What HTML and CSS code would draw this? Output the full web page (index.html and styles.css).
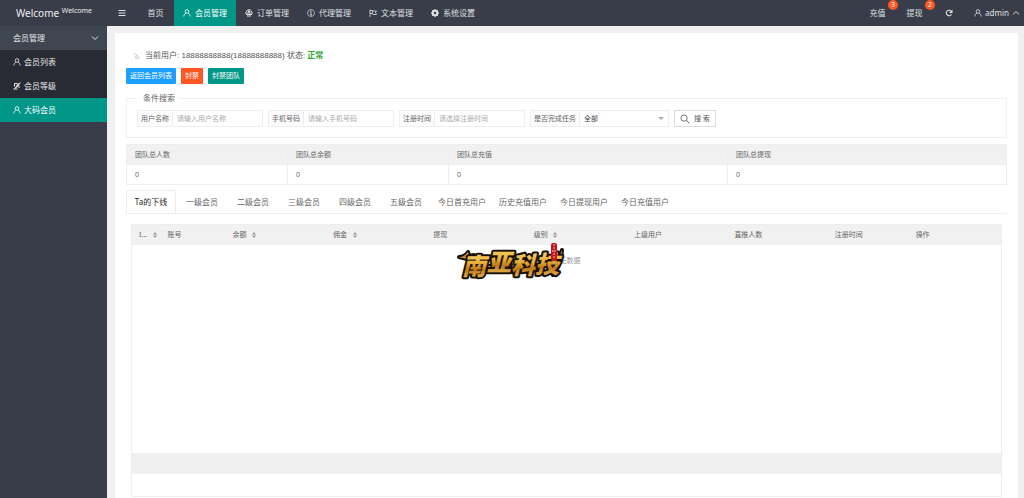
FILE: index.html
```html
<!DOCTYPE html>
<html lang="zh-CN">
<head>
<meta charset="utf-8">
<title>会员管理</title>
<link rel="stylesheet" href="styles.css">
</head>
<body>
<svg class="defs" aria-hidden="true">
  <symbol id="user" viewBox="0 0 16 16"><g fill="none" stroke="currentColor" stroke-width="1.7"><circle cx="8" cy="5" r="3.6"/><path d="M1.5 15c.3-4 2.500-5.800 4.500-6.500M14.500 15c-.3-4-2.500-5.800-4.500-6.500"/></g></symbol>
  <symbol id="down" viewBox="0 0 16 16"><path d="M2 5l6 6 6-6" fill="none" stroke="currentColor" stroke-width="2"/></symbol>
  <symbol id="sort" viewBox="0 0 8 12"><path d="M4 0l4 5H0zM4 12L0 7h8z" fill="#999"/></symbol>
</svg>
<div class="app">
  <aside class="side">
    <div class="brand">Welcome <sup class="brand-sup">Welcome</sup></div>
    <nav class="menu">
      <button class="menu-head" type="button">会员管理<svg class="icon"><use href="#down"/></svg></button>
      <a class="menu-item" href="#"><svg class="icon"><use href="#user"/></svg>会员列表</a>
      <a class="menu-item" href="#"><svg class="icon" viewBox="0 0 16 16"><path d="M3 3h6M3 3v6M12 7v5M1 14h8" fill="none" stroke="currentColor" stroke-width="2"/><path d="M16 0L9 4l-4 6-4 5 7-4 4-5z" fill="currentColor"/></svg>会员等级</a>
      <a class="menu-item active" href="#"><svg class="icon"><use href="#user"/></svg>大码会员</a>
    </nav>
  </aside>
  <div class="body">
    <header class="top">
      <button class="top-item toggle" type="button" aria-label="菜单"><svg class="icon" viewBox="0 0 16 16"><path d="M1 3h14M1 8h14M1 13h14" stroke="currentColor" stroke-width="2"/></svg></button>
      <a class="top-item home" href="#">首页</a>
      <a class="top-item active" href="#"><svg class="icon"><use href="#user"/></svg>会员管理</a>
      <a class="top-item" href="#"><svg class="icon" viewBox="0 0 16 16"><path d="M3 6c0-6 10-6 10 0M0 8h16M2 11h12M4 14h8" fill="none" stroke="currentColor" stroke-width="2"/><path d="M6 3h4v4H6z" fill="currentColor"/></svg>订单管理</a>
      <a class="top-item" href="#"><svg class="icon" viewBox="0 0 16 16"><circle cx="8" cy="8" r="7" fill="none" stroke="currentColor" stroke-width="1.300"/><path d="M6 6l2-1v7M6 12h4M8 2.500v1.500" fill="none" stroke="currentColor" stroke-width="1.600"/></svg>代理管理</a>
      <a class="top-item" href="#"><svg class="icon" viewBox="0 0 16 16"><path d="M2 1v15M2 3h5v6H2M7 4h8l-2 3 2 4H7" fill="none" stroke="currentColor" stroke-width="1.600"/></svg>文本管理</a>
      <a class="top-item" href="#"><svg class="icon" viewBox="0 0 16 16"><circle cx="8" cy="8" r="4.500" fill="none" stroke="currentColor" stroke-width="4"/><path d="M8 0v3M8 13v3M0 8h3M13 8h3M2.500 2.500l2 2M11.500 11.500l2 2M13.500 2.500l-2 2M4.500 11.500l-2 2" stroke="currentColor" stroke-width="2.500"/></svg>系统设置</a>
      <div class="top-right">
        <a class="top-item home" href="#">充值<span class="badge">3</span></a>
        <a class="top-item home" href="#">提现<span class="badge">2</span></a>
        <button class="top-item refresh" type="button" aria-label="刷新"><svg class="icon" viewBox="0 0 16 16"><path d="M13 10.500A5.500 5.500 0 1 1 12 4" fill="none" stroke="currentColor" stroke-width="2.200"/><path d="M15 1v7H8z" fill="currentColor"/></svg></button>
        <button class="top-item account" type="button"><svg class="icon"><use href="#user"/></svg>admin<svg class="icon flip"><use href="#down"/></svg></button>
      </div>
    </header>
    <main class="card">
      <p class="current"><svg class="icon faint" viewBox="0 0 16 16"><path d="M2 3l7 4-6 3M8 8l6 5M4 13h6" fill="none" stroke="currentColor" stroke-width="1.500"/></svg><span>当前用户: 18888888888(18888888888) 状态: <b class="ok">正常</b></span></p>
      <div class="actions">
        <button class="btn blue" type="button">返回会员列表</button>
        <button class="btn orange" type="button">封禁</button>
        <button class="btn teal" type="button">封禁团队</button>
      </div>
      <form class="search-form">
        <fieldset class="search">
          <legend class="legend">条件搜索</legend>
          <div class="fields">
            <div class="field"><label class="label" for="name">用户名称</label><input class="input" id="name" type="text" placeholder="请输入用户名称"></div>
            <div class="field"><label class="label" for="phone">手机号码</label><input class="input" id="phone" type="text" placeholder="请输入手机号码"></div>
            <div class="field"><label class="label" for="time">注册时间</label><input class="input" id="time" type="text" placeholder="请选择注册时间"></div>
            <div class="field wide"><label class="label" for="done">是否完成任务</label><select class="input select" id="done"><option>全部</option></select><svg class="arrow" viewBox="0 0 6 3" aria-hidden="true"><path d="M0 0h6L3 3z" fill="#aaa"/></svg></div>
            <button class="submit" type="button"><svg class="lens" viewBox="0 0 16 16"><path d="M10 10l5 5" stroke="currentColor" stroke-width="1.500"/><circle cx="6.500" cy="6.500" r="5" fill="none" stroke="currentColor" stroke-width="1.300"/></svg>搜 索</button>
          </div>
        </fieldset>
      </form>
      <table class="totals">
        <thead><tr><th class="narrow">团队总人数</th><th class="narrow">团队总余额</th><th>团队总充值</th><th>团队总提现</th></tr></thead>
        <tbody><tr><td>0</td><td>0</td><td>0</td><td>0</td></tr></tbody>
      </table>
      <div class="tabs" role="tablist">
        <button class="tab on" role="tab" aria-selected="true" type="button">Ta的下线</button>
        <button class="tab" role="tab" type="button">一级会员</button>
        <button class="tab" role="tab" type="button">二级会员</button>
        <button class="tab" role="tab" type="button">三级会员</button>
        <button class="tab" role="tab" type="button">四级会员</button>
        <button class="tab" role="tab" type="button">五级会员</button>
        <button class="tab" role="tab" type="button">今日首充用户</button>
        <button class="tab" role="tab" type="button">历史充值用户</button>
        <button class="tab" role="tab" type="button">今日提现用户</button>
        <button class="tab" role="tab" type="button">今日充值用户</button>
      </div>
      <section class="grid">
        <table class="list">
          <thead><tr>
            <th class="c-id">I... <svg class="sort"><use href="#sort"/></svg></th>
            <th class="c-account">账号</th>
            <th>余额 <svg class="sort"><use href="#sort"/></svg></th>
            <th>佣金 <svg class="sort"><use href="#sort"/></svg></th>
            <th>提现</th>
            <th>级别 <svg class="sort"><use href="#sort"/></svg></th>
            <th>上级用户</th>
            <th>直推人数</th>
            <th class="c-date">注册时间</th>
            <th class="c-ops">操作</th>
          </tr></thead>
        </table>
        <div class="empty">
          <span>暂无数据</span>
          <svg class="watermark" viewBox="0 0 108 42" role="img" aria-label="南亚科技">
            <defs><linearGradient id="gold" x1="0" y1="0" x2="0" y2="1"><stop offset="0" stop-color="#ffe98c"/><stop offset=".45" stop-color="#e9b03c"/><stop offset=".65" stop-color="#c07a18"/><stop offset="1" stop-color="#f5cf68"/></linearGradient></defs>
            <g stroke="#17110a" stroke-width="4" stroke-linejoin="round" paint-order="stroke" fill="url(#gold)">
              <path d="M2 17c4 0 7-2 9-5l1 4 5-1-7 4z"/>
              <path d="M96 35c5-5 8-13 9-25l-4 11-7 10z"/>
              <path d="M27 28l5-2 22-1-2 3-19 2z"/>
            </g>
            <g class="wm-text"><text x="5" y="35">南</text><text x="30" y="31">亚</text><text x="54" y="34">科</text><text x="78" y="33">技</text></g>
            <rect x="94" y="3" width="6" height="18" rx="2" fill="#c5161d"/><path d="M96 5h2M96 8h2M95 11h4M96 14h2M96 17h2" stroke="#f7b0a0"/>
          </svg>
        </div>
        <div class="summary"></div>
        <div class="pager"></div>
      </section>
    </main>
  </div>
</div>
</body>
</html>
```

FILE: styles.css
```css
* { box-sizing: border-box; }
body {
  margin: 0;
  background: #f0f0f0;
  color: #666;
  font: 8px/12px "Noto Sans", "Noto Sans CJK SC", sans-serif;
}
button, input, select { font: inherit; color: inherit; margin: 0; }
button { border: 0; background: none; padding: 0; cursor: pointer; }
a { color: inherit; text-decoration: none; }
.defs { position: absolute; width: 0; height: 0; }
.icon { width: 8px; height: 8px; flex: none; }

.app { display: flex; height: 100vh; overflow: hidden; }
.side { width: 107px; flex: none; background: #393d49; color: #e4e5e8; }
.brand {
  height: 26px;
  padding-left: 16px;
  font-size: 10px;
  line-height: 26px;
  color: #eee;
  box-shadow: 0 1px 2px rgba(0, 0, 0, .15);
}
.brand-sup { font-size: 7px; line-height: 0; }
.menu { display: flex; flex-direction: column; background: #282b33; }
.menu-head {
  display: flex;
  align-items: center;
  justify-content: space-between;
  height: 24px;
  padding: 0 8px 0 13px;
  background: #404552;
}
.menu-item { display: flex; align-items: center; gap: 3px; height: 24px; padding-left: 13px; }
.active { background: #009688; color: #fff; }

.body { flex: 1; min-width: 0; display: flex; flex-direction: column; }
.top { display: flex; height: 26px; flex: none; background: #393d49; color: #dfe0e3; }
.top-item {
  position: relative;
  display: flex;
  align-items: center;
  justify-content: center;
  gap: 4px;
  height: 26px;
  padding: 0 9px;
}
.toggle { width: 30px; }
.refresh { width: 31px; }
.home { width: 37px; }
.top-right { display: flex; margin-left: auto; }
.account { gap: 3px; padding: 0 4px 0 10px; }
.flip { transform: rotate(180deg); }
.badge {
  position: absolute;
  top: 0;
  right: -2px;
  width: 10px;
  height: 10px;
  border-radius: 5px;
  background: #ff5722;
  color: #fff;
  font-size: 7px;
  line-height: 10px;
  text-align: center;
}

.card {
  flex: 1;
  min-height: 0;
  display: flex;
  flex-direction: column;
  margin: 7px 6px 0 8px;
  padding: 17px 11px 1px;
  background: #fff;
}
.current {
  display: flex;
  align-items: center;
  gap: 4px;
  margin: 0 0 6px 7px;
  color: #555;
  font-family: "Liberation Sans", "Noto Sans CJK SC", sans-serif;
}
.faint { color: #bbb; }
.ok { color: #2fa52f; }
.actions { display: flex; gap: 5px; }
.btn { height: 16px; padding: 0 4px; border-radius: 1px; color: #fff; font-size: 7px; }
.blue { background: #1e9fff; }
.orange { background: #ff5722; }
.teal { background: #009688; }

.search { margin: 8px 0 6px; padding: 6px 10px 10px; border: 1px solid #f0f0f0; min-width: 0; }
.legend { margin-left: 2px; padding: 0 4px; }
.fields { display: flex; gap: 5px; }
.field { display: flex; align-items: center; width: 126px; height: 17px; border: 1px solid #eee; font-size: 7px; }
.wide { width: 139px; }
.label { padding: 0 3px; border-right: 1px solid #eee; line-height: 15px; white-space: nowrap; background: #fcfcfc; }
.input { flex: 1; min-width: 0; border: 0; padding: 0 4px; background: #fff; outline: 0; }
.input::placeholder { color: #aaa; }
.select { appearance: none; color: #444; }
.arrow { flex: none; width: 6px; height: 3px; margin-right: 4px; pointer-events: none; }
.submit {
  display: flex;
  align-items: center;
  gap: 4px;
  padding: 0 5px;
  border: 1px solid #ddd;
  font-size: 7px;
  color: #555;
}
.lens { width: 10px; height: 10px; }

table { border-collapse: collapse; table-layout: fixed; width: 100%; font-size: 7px; }
th { font-weight: 400; text-align: left; background: #f1f1f1; white-space: nowrap; }
.totals { flex: none; }
.totals th, .totals td { height: 20px; padding: 0 8px; border: 1px solid #eee; }
.narrow { width: 18.3%; }

.tabs { display: flex; gap: 1px; height: 24px; flex: none; margin-top: 5px; border-bottom: 1px solid #eee; }
.tab { min-width: 50px; padding: 0 6px; white-space: nowrap; }
.on { border: 1px solid #eee; border-bottom: 0; background: #fff; color: #222; }

.grid { flex: 1; min-height: 0; display: flex; flex-direction: column; margin: 10px 5px 0; border: 1px solid #eee; }
.list th { height: 20px; padding: 0 5px; }
.sort { width: 4px; height: 6px; margin-left: 4px; vertical-align: middle; }
.list .c-id { width: 3.5%; padding: 0 0 0 7px; }
.c-account { width: 7.5%; }
.c-date { width: 9.3%; }
.c-ops { width: 10.4%; }
.empty { position: relative; flex: 1; padding-top: 10px; text-align: center; font-size: 7px; color: #999; }
.watermark { position: absolute; top: -5px; left: calc(50% - 110px); width: 108px; height: 42px; }
.wm-text {
  font: italic 900 24px "Noto Sans CJK SC", sans-serif;
  fill: url(#gold);
  stroke: #17110a;
  stroke-width: 4px;
  stroke-linejoin: round;
  paint-order: stroke;
}
.summary { height: 21px; background: #f0f0f0; }
.pager { height: 22px; }
```
